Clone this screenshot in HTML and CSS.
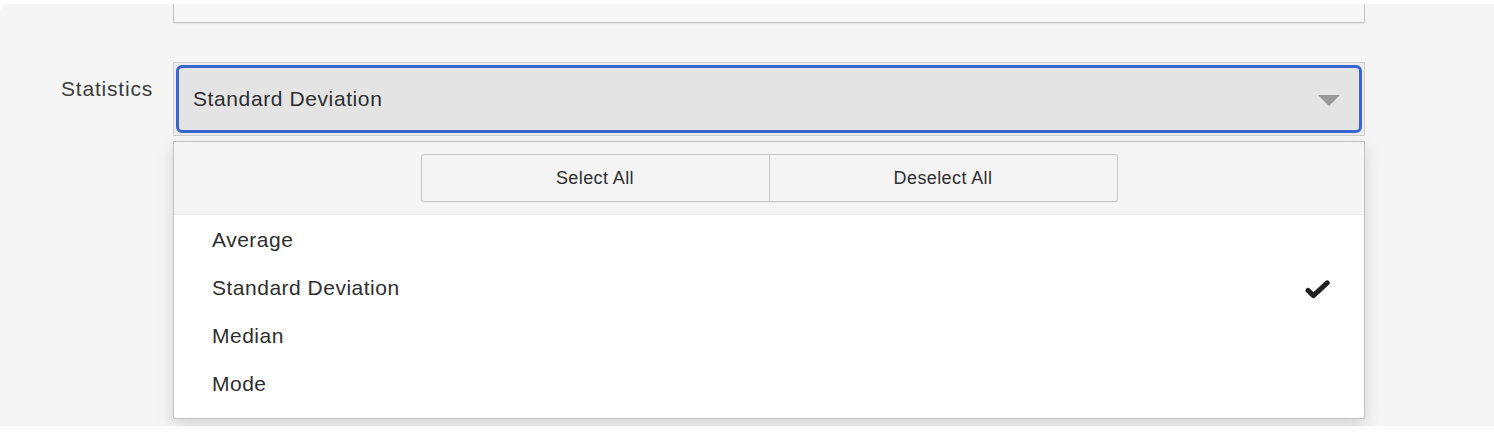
FILE: index.html
```html
<!DOCTYPE html>
<html lang="en">
<head>
<meta charset="utf-8">
<title>Statistics</title>
<link rel="stylesheet" href="styles.css">
</head>
<body>
<div class="panel">
  <div class="form">
    <div class="row row-prev">
      <div class="label"></div>
      <div class="field">
        <div class="prev-box"></div>
      </div>
    </div>
    <div class="row row-stats">
      <div class="label">Statistics</div>
      <div class="field">
        <div class="select-wrap">
          <div class="select">
            <span class="select-value">Standard Deviation</span>
            <span class="caret"></span>
          </div>
        </div>
        <div class="menu">
          <div class="menu-head">
            <div class="btn-group">
              <button class="btn" type="button">Select All</button>
              <button class="btn" type="button">Deselect All</button>
            </div>
          </div>
          <ul class="options">
            <li class="option">Average</li>
            <li class="option selected">Standard Deviation
              <svg class="check" width="25" height="21" viewBox="0 0 25 21" aria-hidden="true"><path d="M3 11.4 L8.4 16.6 L22.2 3.8" fill="none" stroke="#222" stroke-width="5" stroke-linecap="round" stroke-linejoin="round"/></svg>
            </li>
            <li class="option">Median</li>
            <li class="option">Mode</li>
          </ul>
        </div>
      </div>
    </div>
  </div>
</div>
</body>
</html>
```
FILE: styles.css
```css
* { box-sizing: border-box; }

html, body {
  margin: 0;
  padding: 0;
  background: #ffffff;
}

body {
  font-family: "Liberation Sans", Arial, Helvetica, sans-serif;
  color: #2e2e2e;
}

.panel {
  margin-top: 4px;
  height: 422px;
  background: #f5f5f5;
  border-top-left-radius: 8px;
}

.form {
  display: flex;
  flex-direction: column;
  gap: 39px;
}

.row {
  display: grid;
  grid-template-columns: 153px 1192px;
  column-gap: 20px;
  align-items: start;
}

.label {
  text-align: right;
  font-size: 21px;
  letter-spacing: 0.8px;
  color: #3c3c3c;
  padding-top: 15px;
  line-height: 24px;
}

.row-prev .label { padding-top: 0; }

.prev-box {
  height: 19px;
  background: #f6f6f6;
  border: 1px solid #c6c6c6;
  border-top: none;
  box-shadow: 0 1px 1px rgba(0, 0, 0, 0.06);
}

.field {
  position: relative;
}

.select-wrap {
  height: 74px;
  border: 1px solid #d0d0d0;
  background: #ececec;
  padding: 2px;
}

.select {
  height: 100%;
  border: 3px solid #3a64d0;
  border-radius: 6px;
  background: #e4e4e4;
  display: flex;
  align-items: center;
  justify-content: space-between;
  padding: 0 19px 0 14px;
}

.select-value {
  font-size: 21px;
  letter-spacing: 0.6px;
  color: #2e2e2e;
}

.caret {
  width: 0;
  height: 0;
  border-left: 11.5px solid transparent;
  border-right: 11.5px solid transparent;
  border-top: 11px solid #9a9a9a;
  margin-top: 3px;
}

.menu {
  position: absolute;
  left: 0;
  right: 0;
  top: calc(100% + 5px);
  background: #ffffff;
  border: 1px solid #c2c2c2;
  box-shadow: 0 6px 16px rgba(0, 0, 0, 0.14);
}

.menu-head {
  background: #f5f5f5;
  border-bottom: 1px solid #ebebeb;
  padding: 12px 0;
  display: flex;
  justify-content: center;
}

.btn-group {
  display: flex;
  width: 697px;
  height: 48px;
  border: 1px solid #c8c8c8;
  border-radius: 3px;
  background: #f4f4f4;
  box-shadow: 0 1px 1px rgba(0, 0, 0, 0.05);
}

.btn {
  flex: 1;
  border: none;
  background: transparent;
  font-family: "Liberation Sans", Arial, Helvetica, sans-serif;
  font-size: 18px;
  letter-spacing: 0.4px;
  color: #2e2e2e;
  padding: 0;
  margin: 0;
  cursor: pointer;
}

.btn + .btn {
  border-left: 1px solid #c8c8c8;
}

.options {
  list-style: none;
  margin: 0;
  padding: 1px 0 10px;
}

.option {
  height: 48px;
  display: flex;
  align-items: center;
  justify-content: space-between;
  padding: 0 34px 0 38px;
  font-size: 21px;
  letter-spacing: 0.5px;
  color: #2e2e2e;
}

.check {
  display: block;
  margin-top: 2px;
}
```
